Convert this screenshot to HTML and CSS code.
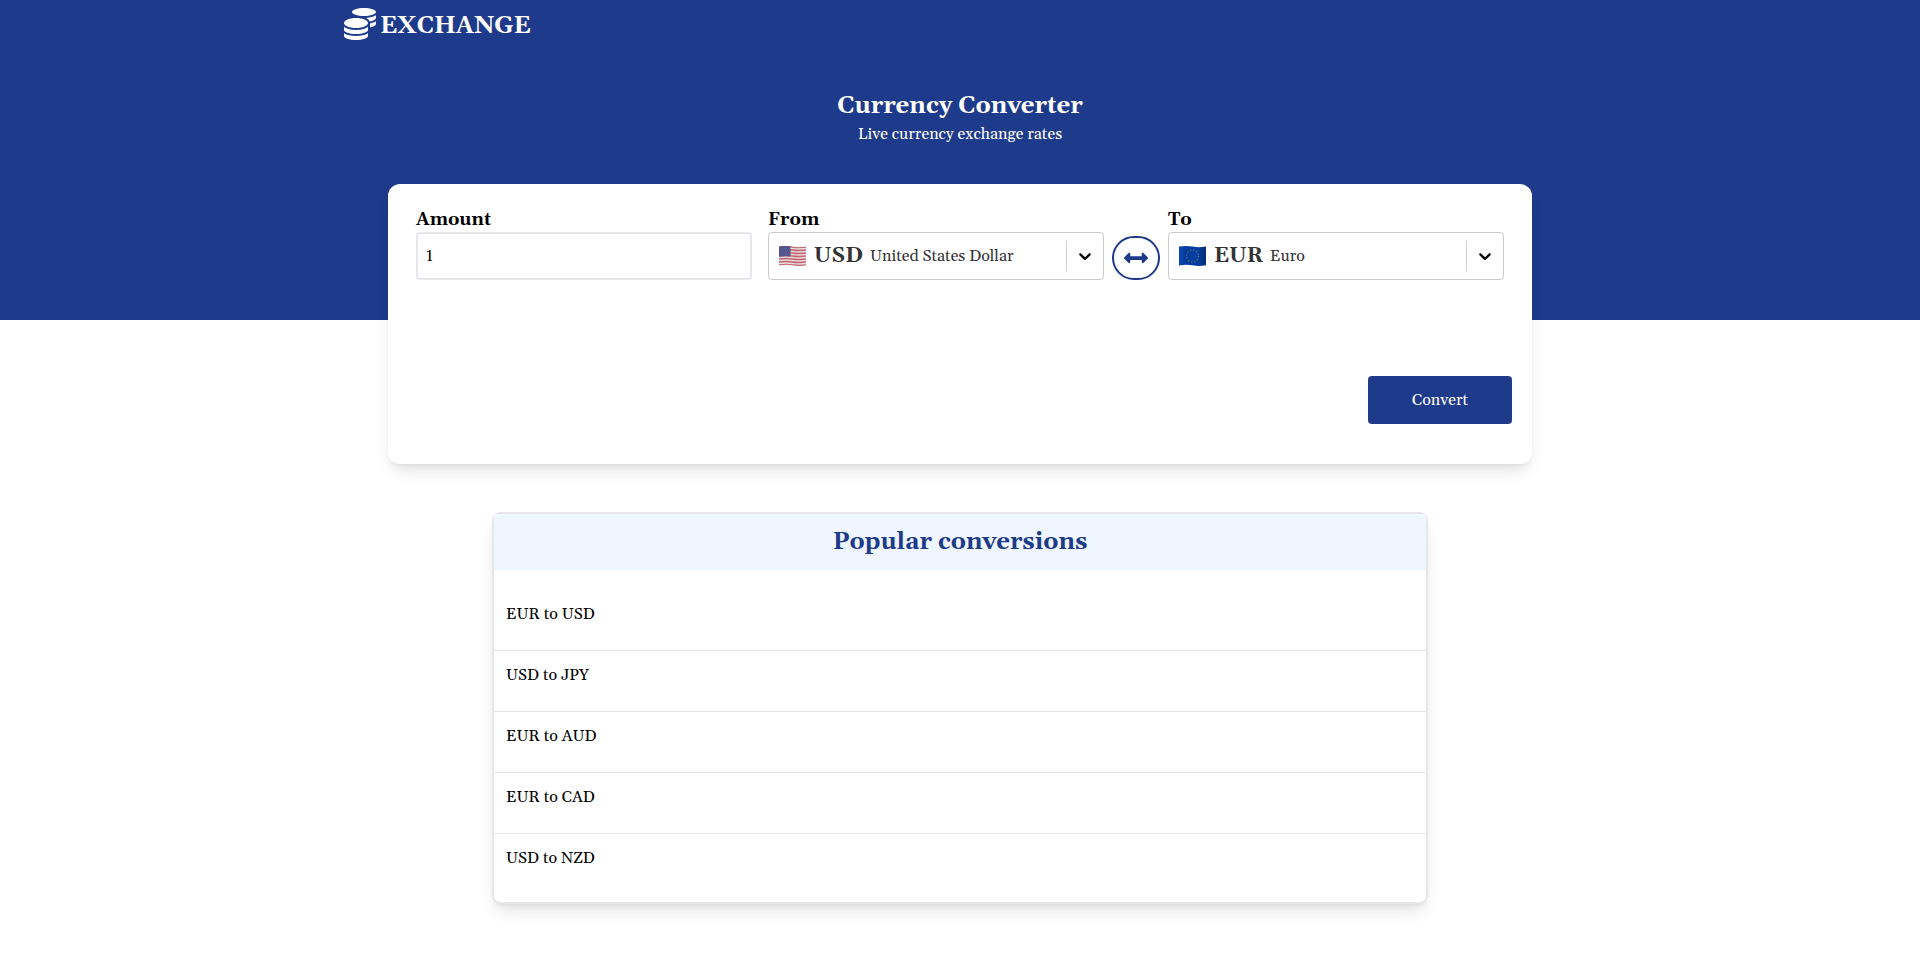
FILE: index.html
```
<!DOCTYPE html>
<html lang="en">
<head>
<meta charset="utf-8">
<meta name="viewport" content="width=device-width, initial-scale=1">
<title>Currency Converter</title>
<link rel="stylesheet" href="styles.css">
</head>
<body>
<header class="hero">
  <nav class="nav">
    <a class="brand" href="#">
      <svg class="brand-icon" viewBox="0 0 512 512" aria-hidden="true"><path fill="currentColor" d="M0 405.300V448c0 35.300 86 64 192 64s192-28.700 192-64v-42.700C342.700 434.400 267.200 448 192 448S41.300 434.400 0 405.300zM320 128c106 0 192-28.700 192-64S426 0 320 0 128 28.700 128 64s86 64 192 64zM0 300.400V352c0 35.300 86 64 192 64s192-28.700 192-64v-51.600c-41.300 34-116.900 51.600-192 51.600S41.300 334.400 0 300.400zm416 11c57.300-11.100 96-31.700 96-55.400v-42.700c-23.200 16.400-57.300 27.600-96 34.500v63.600zM192 160C86 160 0 195.800 0 240s86 80 192 80 192-35.800 192-80-86-80-192-80zm219.300 56.300c60-10.800 100.700-32 100.700-56.300v-42.700c-35.500 25.100-96.500 38.600-160.700 41.800 29.500 14.300 51.200 33.500 60 57.200z"/></svg>
      <span>EXCHANGE</span>
    </a>
  </nav>
  <div class="intro">
    <h1 class="title">Currency Converter</h1>
    <p class="subtitle">Live currency exchange rates</p>
  </div>
</header>
<main>
  <form class="card">
    <div class="fields">
      <div class="field">
        <label class="label" for="amount">Amount</label>
        <input class="amount" id="amount" type="text" inputmode="decimal" value="1">
      </div>
      <div class="field">
        <label class="label" for="from">From</label>
        <div class="picker">
          <select class="select" id="from"><option>United States Dollar</option><option>Euro</option></select>
          <span class="chosen">
            <svg class="flag" viewBox="0 0 27 20" aria-hidden="true">
              <defs><clipPath id="wave"><path d="M0 .6Q7-.5 13.500.6T27 .5V19.200Q20 20.500 13.500 19.300T0 19.500z"/></clipPath></defs>
              <g clip-path="url(#wave)">
                <path fill="#e4dfe3" d="M0 0h27v20H0z"/>
                <g fill="none" stroke="#c8606b" stroke-width="1.600"><path d="M0 1Q7 0 13.500 1T27 1M0 4Q7 3 13.500 4T27 4M0 7Q7 6 13.500 7T27 7M0 10Q7 9 13.500 10T27 10M0 13Q7 12 13.500 13T27 13M0 16Q7 15 13.500 16T27 16M0 19Q7 18 13.500 19T27 19"/></g>
                <path fill="#50528a" d="M0 0h11.500v10.600Q6 9.700 0 10.700z"/>
                <path fill="none" stroke="#7476a3" stroke-width=".6" stroke-dasharray=".8 1.200" d="M1 2.500h10M2 4.500h9M1 6.500h10M2 8.500h9"/>
              </g>
            </svg>
            <strong class="code">USD</strong>
          </span>
          <svg class="chevron" viewBox="0 0 20 20" aria-hidden="true"><path d="M4.516 7.548c0.436-0.446 1.043-0.481 1.576 0l3.908 3.747 3.908-3.747c0.533-0.481 1.141-0.446 1.574 0 0.436 0.445 0.408 1.197 0 1.615-0.406 0.418-4.695 4.502-4.695 4.502-0.217 0.223-0.502 0.335-0.787 0.335s-0.570-0.112-0.789-0.335c0 0-4.287-4.084-4.695-4.502s-0.436-1.170 0-1.615z"/></svg>
        </div>
      </div>
      <button class="swap" type="button" aria-label="Swap currencies">
        <svg class="swap-icon" viewBox="0 0 512 512" aria-hidden="true"><path fill="currentColor" d="M377.941 169.941V216H134.059v-46.059c0-21.382-25.851-32.090-40.971-16.971L7.029 239.029c-9.373 9.373-9.373 24.568 0 33.941l86.059 86.059c15.119 15.119 40.971 4.411 40.971-16.971V296h243.882v46.059c0 21.382 25.851 32.090 40.971 16.971l86.059-86.059c9.373-9.373 9.373-24.568 0-33.941l-86.059-86.059c-15.119-15.120-40.971-4.412-40.971 16.970z"/></svg>
      </button>
      <div class="field">
        <label class="label" for="to">To</label>
        <div class="picker">
          <select class="select" id="to"><option>Euro</option><option>United States Dollar</option></select>
          <span class="chosen">
            <svg class="flag" viewBox="0 0 27 20" aria-hidden="true">
              <defs><linearGradient id="cloth"><stop offset="0" stop-color="#0748b0"/><stop offset=".3" stop-color="#043a9c"/><stop offset=".65" stop-color="#0540a6"/><stop offset="1" stop-color="#062b78"/></linearGradient></defs>
              <path fill="url(#cloth)" d="M0 .6Q7-.5 13.500.6T27 .5V19.200Q20 20.500 13.500 19.300T0 19.500z"/>
              <circle cx="13.500" cy="10" r="6" fill="none" stroke="#60764f" stroke-width="1.200" stroke-dasharray="1.200 1.942"/>
            </svg>
            <strong class="code">EUR</strong>
          </span>
          <svg class="chevron" viewBox="0 0 20 20" aria-hidden="true"><path d="M4.516 7.548c0.436-0.446 1.043-0.481 1.576 0l3.908 3.747 3.908-3.747c0.533-0.481 1.141-0.446 1.574 0 0.436 0.445 0.408 1.197 0 1.615-0.406 0.418-4.695 4.502-4.695 4.502-0.217 0.223-0.502 0.335-0.787 0.335s-0.570-0.112-0.789-0.335c0 0-4.287-4.084-4.695-4.502s-0.436-1.170 0-1.615z"/></svg>
        </div>
      </div>
    </div>
    <div class="actions"><button class="convert" type="submit">Convert</button></div>
  </form>
  <section class="popular">
    <h2 class="popular-title">Popular conversions</h2>
    <ul class="pairs">
      <li class="pair"><a href="#">EUR to USD</a></li>
      <li class="pair"><a href="#">USD to JPY</a></li>
      <li class="pair"><a href="#">EUR to AUD</a></li>
      <li class="pair"><a href="#">EUR to CAD</a></li>
      <li class="pair"><a href="#">USD to NZD</a></li>
    </ul>
  </section>
</main>
</body>
</html>
```
FILE: styles.css
```
*, *::before, *::after { box-sizing: border-box; }
body {
  margin: 0;
  background: #fff;
  color: #000;
  font-family: Gelasio, Georgia, Cambria, "Liberation Serif", serif;
  font-size: 16px;
  line-height: 24px;
}
h1, h2, p, ul { margin: 0; padding: 0; }
a { color: inherit; text-decoration: none; }
button, input, select { font: inherit; color: inherit; margin: 0; }
svg { display: block; }

.hero { background: #1e3a8a; color: #fff; padding-bottom: 174px; }
.nav { max-width: 1280px; margin: 0 auto; padding: 8px 24px; }
.brand { display: flex; align-items: flex-start; gap: 4px; width: fit-content; font-size: 24px; font-weight: 700; line-height: 36px; }
.brand-icon { width: 32px; height: 32px; }
.intro { padding-top: 38px; text-align: center; }
.title { font-size: 24px; line-height: 32px; }

.card {
  max-width: 1144px;
  margin: -136px auto 0;
  padding: 24px 20px 40px;
  background: #fff;
  border-radius: 12px;
  box-shadow: 0 10px 15px -3px rgba(0, 0, 0, .1), 0 4px 6px -4px rgba(0, 0, 0, .1);
}
.fields { display: flex; align-items: flex-end; gap: 8px; padding: 0 8px; }
.field { flex: 1; min-width: 0; }
.field:first-child { margin-right: 8px; }
.label { display: block; font-size: 18px; font-weight: 700; line-height: 24px; }
.amount { display: block; width: 100%; height: 48px; padding: 4px 8px; border: 2px solid #e5e7eb; border-radius: 4px; background: #fff; font-variant-numeric: lining-nums; }
.picker { position: relative; }
.select {
  display: block;
  width: 100%;
  height: 48px;
  padding: 0 56px 0 101px;
  border: 1px solid #ccc;
  border-radius: 4px;
  background: #fff;
  color: #333;
  appearance: none;
}
.chosen { position: absolute; inset: 0 auto 0 11px; display: flex; align-items: center; gap: 8px; color: #333; pointer-events: none; }
.flag { width: 27px; height: 20px; }
.code { font-size: 21px; line-height: 28px; }
.chevron { position: absolute; top: 9px; right: 1px; width: 37px; height: 30px; padding: 5px 8px; border-left: 1px solid #ccc; pointer-events: none; }
.swap { display: grid; place-items: center; width: 48px; height: 44px; padding: 0; border: 2px solid #1e3a8a; border-radius: 24px; background: #fff; color: #1e3a8a; }
.swap-icon { width: 24px; height: 24px; }
.actions { display: flex; justify-content: flex-end; padding-top: 96px; }
.convert { width: 144px; height: 48px; border: 0; border-radius: 4px; background: #1e3a8a; color: #fff; }

.popular {
  max-width: 936px;
  margin: 48px auto;
  border: 2px solid #e5e7eb;
  border-radius: 8px;
  background: #fff;
  box-shadow: 0 10px 15px -3px rgba(0, 0, 0, .1), 0 4px 6px -4px rgba(0, 0, 0, .1);
}
.popular-title { padding: 12px; background: #eff6ff; color: #1e3a8a; font-size: 24px; line-height: 32px; text-align: center; }
.pairs { padding: 20px 0 8px; list-style: none; }
.pair { padding: 12px 12px 24px; border-bottom: 1px solid #e5e7eb; }
.pair:last-child { border-bottom: 0; }
```
